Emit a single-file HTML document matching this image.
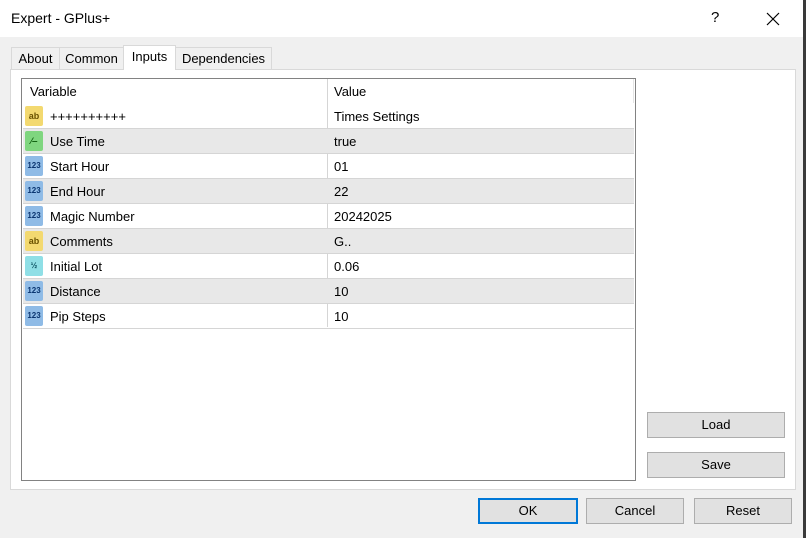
<!DOCTYPE html><html><head><style>
*{margin:0;padding:0;box-sizing:border-box}
body{width:806px;height:538px;background:#3a3a3a;font-family:"Liberation Sans",Arial,sans-serif;font-size:13px;color:#000;position:relative;overflow:hidden}
.win{position:absolute;left:0;top:0;width:803px;height:538px;background:#f0f0f0}
.title{position:absolute;left:0;top:0;width:803px;height:37px;background:#fff}
.title .t{position:absolute;left:11px;top:10px;font-size:14px}
.abs{position:absolute}
.tab{position:absolute;top:47px;height:22px;border:1px solid #d9d9d9;border-bottom:none;background:#f0f0f0;font-size:13px;text-align:center;line-height:21px}
.tab.sel{top:45px;height:25px;background:#fff;z-index:2;line-height:22px}
.panel{position:absolute;left:10px;top:69px;width:786px;height:421px;background:#fff;border:1px solid #d9d9d9}
.list{position:absolute;left:21px;top:78px;width:615px;height:403px;border:1px solid #828282;background:#fff}
.row{position:absolute;left:1px;width:611px;height:25px;border-bottom:1px solid #d5d5d5}
.row.g{background:#e8e8e8}
.row span{position:absolute;top:5px}
.c1{left:27px}.c2{left:311px}
.div{position:absolute;left:305px;top:0;width:1px;height:248px;background:#d5d5d5}
.ic{position:absolute;left:2px;top:2px;width:18px;height:20px;border-radius:2px;font-size:9px;font-weight:bold;text-align:center;line-height:20px}
.btn{position:absolute;height:26px;border:1px solid #adadad;background:#e1e1e1;text-align:center;line-height:24px;font-size:13px}
</style></head><body><div class="win">
<div class="title"><span class="t">Expert - GPlus+</span>
<span class="abs" style="left:711px;top:9px;font-size:15px">?</span>
<svg class="abs" style="left:766px;top:12px" width="14" height="14"><path d="M1 1L13 13M13 1L1 13" stroke="#000" stroke-width="1.2"/></svg></div>
<div class="tab" style="left:11px;width:49px">About</div>
<div class="tab" style="left:59px;width:65px">Common</div>
<div class="tab sel" style="left:123px;width:53px">Inputs</div>
<div class="tab" style="left:175px;width:97px">Dependencies</div>
<div class="panel"></div>
<div class="list">
<div class="div"></div>
<div class="abs" style="left:611px;top:0;width:1px;height:24px;background:#e5e5e5"></div>
<div class="row" style="top:0;border:none"><span style="left:7px">Variable</span><span class="c2">Value</span></div>
<div class="row" style="top:25px"><div class="ic" style="background:#f3d970;color:#6a5200">ab</div><span class="c1">++++++++++</span><span class="c2">Times Settings</span></div>
<div class="row g" style="top:50px"><div class="ic" style="background:#7fd67f;color:#0a5a0a">⁄‒</div><span class="c1">Use Time</span><span class="c2">true</span></div>
<div class="row" style="top:75px"><div class="ic" style="background:#8fbbe6;color:#0a3570;font-size:8px">123</div><span class="c1">Start Hour</span><span class="c2">01</span></div>
<div class="row g" style="top:100px"><div class="ic" style="background:#8fbbe6;color:#0a3570;font-size:8px">123</div><span class="c1">End Hour</span><span class="c2">22</span></div>
<div class="row" style="top:125px"><div class="ic" style="background:#8fbbe6;color:#0a3570;font-size:8px">123</div><span class="c1">Magic Number</span><span class="c2">20242025</span></div>
<div class="row g" style="top:150px"><div class="ic" style="background:#f3d970;color:#6a5200">ab</div><span class="c1">Comments</span><span class="c2">G..</span></div>
<div class="row" style="top:175px"><div class="ic" style="background:#8fdfe6;color:#0a5060;font-size:8px">½</div><span class="c1">Initial Lot</span><span class="c2">0.06</span></div>
<div class="row g" style="top:200px"><div class="ic" style="background:#8fbbe6;color:#0a3570;font-size:8px">123</div><span class="c1">Distance</span><span class="c2">10</span></div>
<div class="row" style="top:225px"><div class="ic" style="background:#8fbbe6;color:#0a3570;font-size:8px">123</div><span class="c1">Pip Steps</span><span class="c2">10</span></div>
</div>
<div class="btn" style="left:647px;top:412px;width:138px">Load</div>
<div class="btn" style="left:647px;top:452px;width:138px">Save</div>
<div class="btn" style="left:478px;top:498px;width:100px;border:1px solid #0078d7;box-shadow:inset 0 0 0 1px #0078d7">OK</div>
<div class="btn" style="left:586px;top:498px;width:98px">Cancel</div>
<div class="btn" style="left:694px;top:498px;width:98px">Reset</div>
</div></body></html>
